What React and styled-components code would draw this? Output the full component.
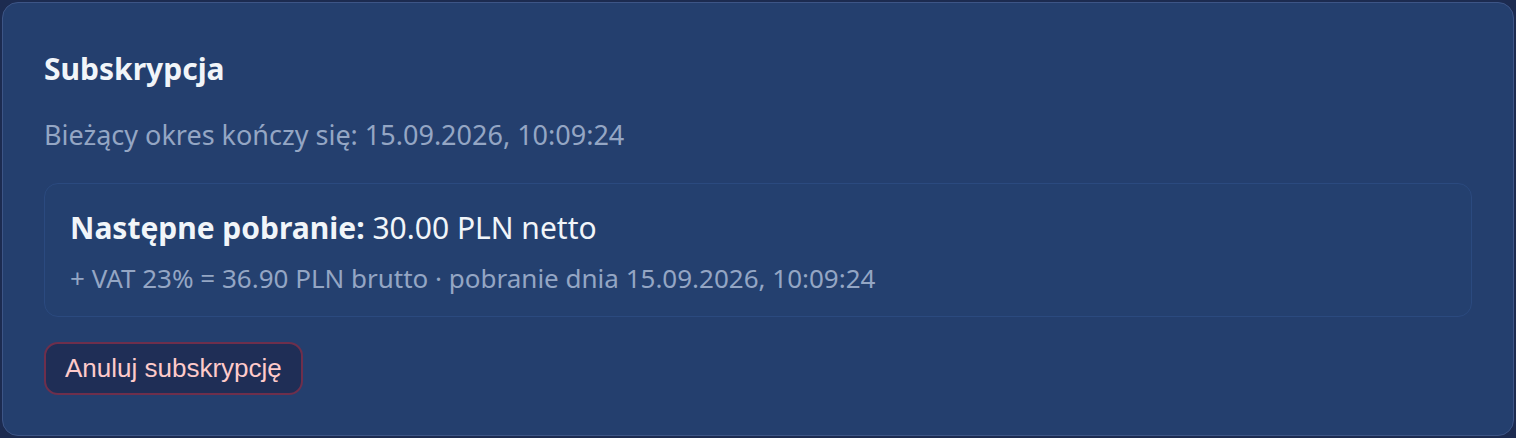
import React from "react";
import styled, { createGlobalStyle } from "styled-components";

const GlobalStyle = createGlobalStyle`
  html, body {
    margin: 0;
    padding: 0;
    background: #1c2b50;
  }
  body {
    font-family: "Noto Sans", "Open Sans", sans-serif;
  }
`;

const Page = styled.div`
  padding: 2px;
  height: 438px;
  box-sizing: border-box;
`;

const Card = styled.section`
  height: 100%;
  box-sizing: border-box;
  background: #243f6e;
  border: 1px solid #3d5586;
  border-radius: 16px;
  padding: 46px 41px 40px 41px;
  display: flex;
  flex-direction: column;
`;

const Title = styled.h2`
  margin: 0;
  font-size: 30px;
  font-weight: 700;
  line-height: 40px;
  color: #f1f5f9;
`;

const Muted = styled.p`
  margin: 28px 0 0;
  font-size: 27px;
  line-height: 36px;
  color: #94a6c4;
`;

const ChargeBox = styled.div`
  margin-top: 30px;
  border: 1px solid #2b4a7f;
  border-radius: 14px;
  background: #24406f;
  padding: 24px 25px 20px;
`;

const ChargeLine = styled.div`
  font-size: 30px;
  line-height: 40px;
  color: #f1f5f9;

  strong {
    font-weight: 700;
  }
`;

const ChargeNote = styled.div`
  margin-top: 12px;
  font-size: 26px;
  line-height: 36px;
  color: #94a6c4;
`;

const CancelButton = styled.button`
  align-self: flex-start;
  margin-top: 25px;
  height: 53px;
  padding: 0 19px;
  font-family: "Liberation Sans", Arial, sans-serif;
  font-size: 26px;
  color: #fecaca;
  background: #1f2e56;
  border: 2px solid #6e2f4c;
  border-radius: 14px;
  cursor: pointer;
`;

export default function App() {
  return (
    <Page>
      <GlobalStyle />
      <Card>
        <Title>Subskrypcja</Title>
        <Muted>Bieżący okres kończy się: 15.09.2026, 10:09:24</Muted>
        <ChargeBox>
          <ChargeLine>
            <strong>Następne pobranie:</strong> 30.00 PLN netto
          </ChargeLine>
          <ChargeNote>
            + VAT 23% = 36.90 PLN brutto · pobranie dnia 15.09.2026, 10:09:24
          </ChargeNote>
        </ChargeBox>
        <CancelButton>Anuluj subskrypcję</CancelButton>
      </Card>
    </Page>
  );
}
